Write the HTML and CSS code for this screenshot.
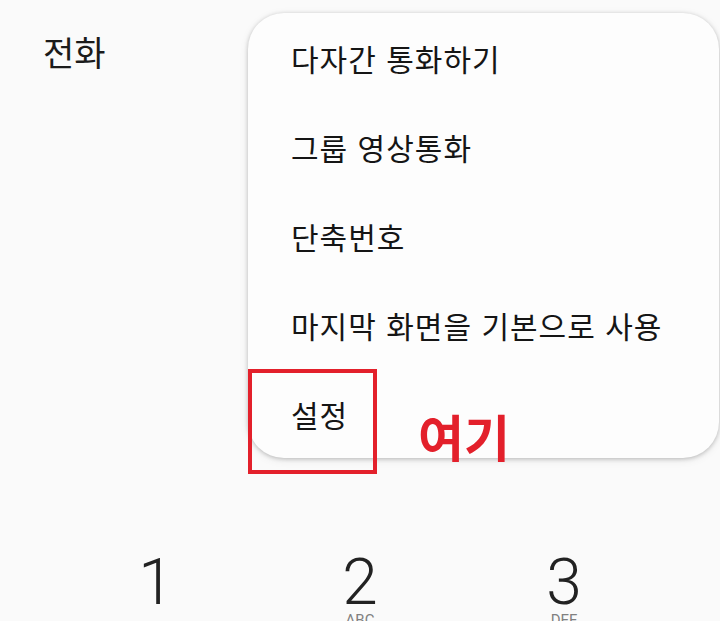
FILE: index.html
```html
<!DOCTYPE html>
<html lang="ko">
<head>
<meta charset="utf-8">
<link rel="stylesheet" href="styles.css">
</head>
<body>
<div class="screen">
  <header class="appbar">
    <h1 class="title">전화</h1>
  </header>
  <div class="dialpad">
    <div class="key"><span class="digit">1</span><span class="letters">&nbsp;</span></div>
    <div class="key"><span class="digit">2</span><span class="letters">ABC</span></div>
    <div class="key"><span class="digit">3</span><span class="letters">DEF</span></div>
  </div>
  <ul class="menu">
    <li class="menu-item">다자간 통화하기</li>
    <li class="menu-item">그룹 영상통화</li>
    <li class="menu-item">단축번호</li>
    <li class="menu-item">마지막 화면을 기본으로 사용</li>
    <li class="menu-item">설정</li>
  </ul>
  <div class="highlight"></div>
  <div class="note">여기</div>
</div>
</body>
</html>
```

FILE: styles.css
```css
html, body {
  margin: 0;
  padding: 0;
  background: #fafafa;
}
.screen {
  position: relative;
  width: 720px;
  height: 621px;
  overflow: hidden;
  background: #fafafa;
  font-family: "Noto Sans CJK KR", "Noto Sans", sans-serif;
  color: #1b1b1b;
}
.appbar {
  padding: 29px 0 0 43px;
  height: 120px;
  box-sizing: border-box;
}
.title {
  margin: 0;
  font-size: 34px;
  font-weight: 400;
  line-height: 46px;
}
.dialpad {
  display: grid;
  grid-template-columns: repeat(3, 1fr);
  padding: 0 54px;
  margin-top: 435px;
}
.key {
  display: flex;
  flex-direction: column;
  align-items: center;
}
.digit {
  font-family: Roboto, "Noto Sans", sans-serif;
  font-weight: 300;
  font-size: 64px;
  line-height: 56px;
  color: #222;
}
.letters {
  font-family: Roboto, "Noto Sans", sans-serif;
  font-size: 15px;
  line-height: 18px;
  color: #808080;
}
.menu {
  position: absolute;
  left: 248px;
  top: 13px;
  width: 471px;
  margin: 0;
  padding: 0;
  list-style: none;
  background: #fdfdfd;
  border-radius: 36px;
  box-shadow: 0 1px 4px rgba(0,0,0,0.22), 0 2px 10px rgba(0,0,0,0.08);
}
.menu-item {
  height: 89px;
  display: flex;
  align-items: center;
  padding-left: 43px;
  font-size: 30px;
  letter-spacing: 1px;
  color: #151515;
}
.highlight {
  position: absolute;
  left: 248px;
  top: 369px;
  width: 121px;
  height: 97px;
  border: 4px solid #e3202b;
}
.note {
  position: absolute;
  left: 418px;
  top: 400px;
  font-size: 50px;
  font-weight: 700;
  line-height: 70px;
  color: #e3202b;
}
```
